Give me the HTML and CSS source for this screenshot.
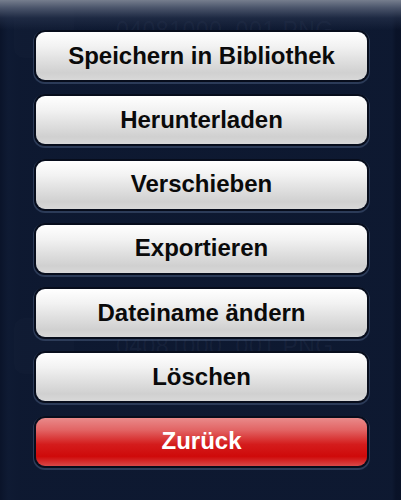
FILE: index.html
```html
<!DOCTYPE html>
<html>
<head>
<meta charset="utf-8">
<link rel="stylesheet" href="styles.css">
</head>
<body>
<div class="under">
  <div class="row row1"><span class="thumb"></span><span class="fname">04081000_001.PNG</span></div>
  <div class="row row2"><span class="thumb"></span><span class="fname">04081000_001.PNG</span></div>
</div>
<div class="sheet">
  <div class="shade"></div>
  <div class="buttons">
    <div class="btn">Speichern in Bibliothek</div>
    <div class="btn">Herunterladen</div>
    <div class="btn">Verschieben</div>
    <div class="btn">Exportieren</div>
    <div class="btn">Dateiname ändern</div>
    <div class="btn">Löschen</div>
    <div class="btn red">Zurück</div>
  </div>
</div>
</body>
</html>
```
FILE: styles.css
```css
html, body {
  margin: 0;
  padding: 0;
}
body {
  width: 401px;
  height: 500px;
  overflow: hidden;
  background: #0d1830;
  font-family: "Liberation Sans", Arial, sans-serif;
  position: relative;
}
.under {
  display: flex;
  flex-direction: column;
}
.row {
  display: flex;
  align-items: center;
  gap: 42px;
  height: 60px;
  padding-left: 14px;
}
.row1 {
  margin-top: 0;
}
.row2 {
  margin-top: 256px;
}
.thumb {
  width: 60px;
  height: 56px;
  border-radius: 10px;
  background: rgba(255,255,255,0.015);
}
.fname {
  font-size: 23px;
  color: rgba(160,180,215,0.08);
  letter-spacing: 0.5px;
}
.sheet {
  position: absolute;
  left: 0;
  top: 0;
  width: 401px;
  height: 500px;
  background: linear-gradient(to right, rgba(5,12,30,0.35) 0, rgba(20,34,60,0.25) 8px, rgba(16,28,52,0.2) 20px, rgba(16,28,52,0.2) 392px, rgba(5,12,30,0.45) 396px);
}
.shade {
  position: absolute;
  left: 0;
  top: 0;
  width: 401px;
  height: 30px;
  background: linear-gradient(to bottom, rgba(118,126,142,1) 0, rgba(80,90,112,0.9) 8px, rgba(40,52,78,0.6) 18px, rgba(18,30,55,0) 30px);
}
.buttons {
  position: relative;
  display: flex;
  flex-direction: column;
  gap: 16.3px;
  padding-top: 32px;
  padding-left: 36px;
}
.btn {
  width: 331px;
  height: 48px;
  box-sizing: border-box;
  border-radius: 9px;
  display: flex;
  align-items: center;
  justify-content: center;
  font-weight: bold;
  font-size: 24px;
  color: #0a0a0a;
  background: linear-gradient(to bottom, #ffffff 0%, #f2f2f2 30%, #e2e2e2 55%, #d0d0d0 85%, #d8d8d8 100%);
  box-shadow: 0 0 0 2px #070d1c, 0 1px 0 3px rgba(70,88,120,0.55);
  padding-bottom: 1px;
}
.red {
  color: #ffffff;
  background: linear-gradient(to bottom, #e98a8a 0%, #e26464 25%, #d41c1c 55%, #cf0a0a 80%, #d84848 100%);
}
```
